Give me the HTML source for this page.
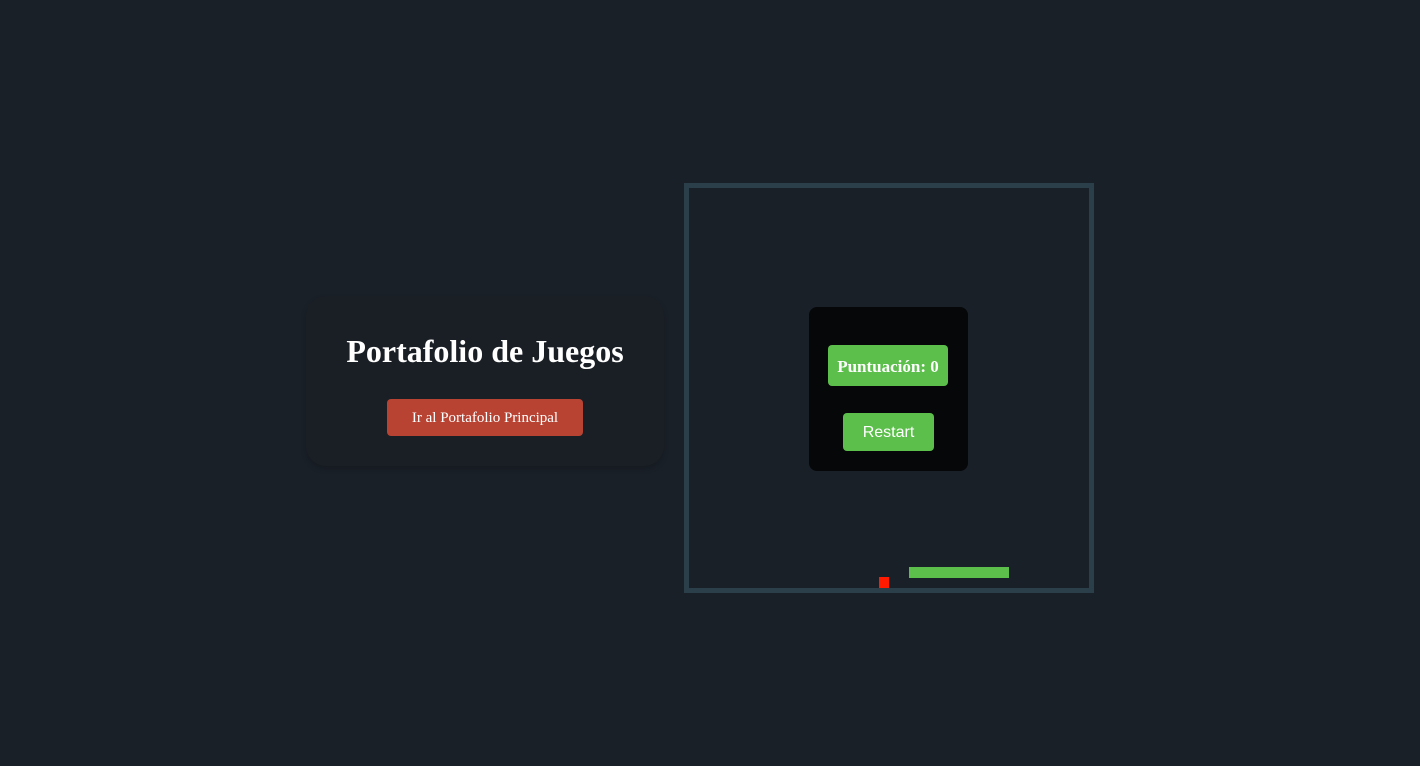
<!DOCTYPE html>
<html><head><meta charset="utf-8"><style>
html,body{margin:0;padding:0;width:1420px;height:766px;background:#1a2028;overflow:hidden;position:relative}
.card{position:absolute;left:306px;top:296px;width:358px;height:170px;border-radius:20px;background:#1a1f26;box-shadow:0 3px 6px rgba(0,0,0,.18)}
.btn{position:absolute;left:387px;top:399px;width:196px;height:37px;background:#b94332;border-radius:4px;color:#fff;font:15px "Liberation Serif",serif;text-align:center;line-height:39px}
.game{position:absolute;left:684px;top:183px;width:400px;height:400px;border:5px solid #2b3f4b}
.ov{position:absolute;left:809px;top:307px;width:159px;height:164px;background:#050709;border-radius:8px}
.score{position:absolute;left:828px;top:345px;width:120px;height:41px;background:#5cbf4b;border-radius:4px;color:#fff;font:bold 17px "Liberation Serif",serif;text-align:center;line-height:43px}
.rs{position:absolute;left:843px;top:413px;width:91px;height:38px;background:#5cbf4b;border-radius:4px;color:#fff;font:16px "Liberation Sans",sans-serif;text-align:center;line-height:40px}
</style></head><body>
<div class="card"></div>
<h1 style="position:absolute;left:306px;width:358px;top:333px;margin:0;text-align:center;font:bold 32px 'Liberation Serif',serif;color:#fff">Portafolio de Juegos</h1>
<div class="btn">Ir al Portafolio Principal</div>
<div class="game"></div>
<div class="ov"></div>
<div class="score">Puntuación: 0</div>
<div class="rs">Restart</div>
<div style="position:absolute;left:909px;top:567px;width:100px;height:11px;background:#5cbf4b"></div>
<div style="position:absolute;left:879px;top:577px;width:10px;height:11px;background:#ff1a00"></div>
</body></html>
